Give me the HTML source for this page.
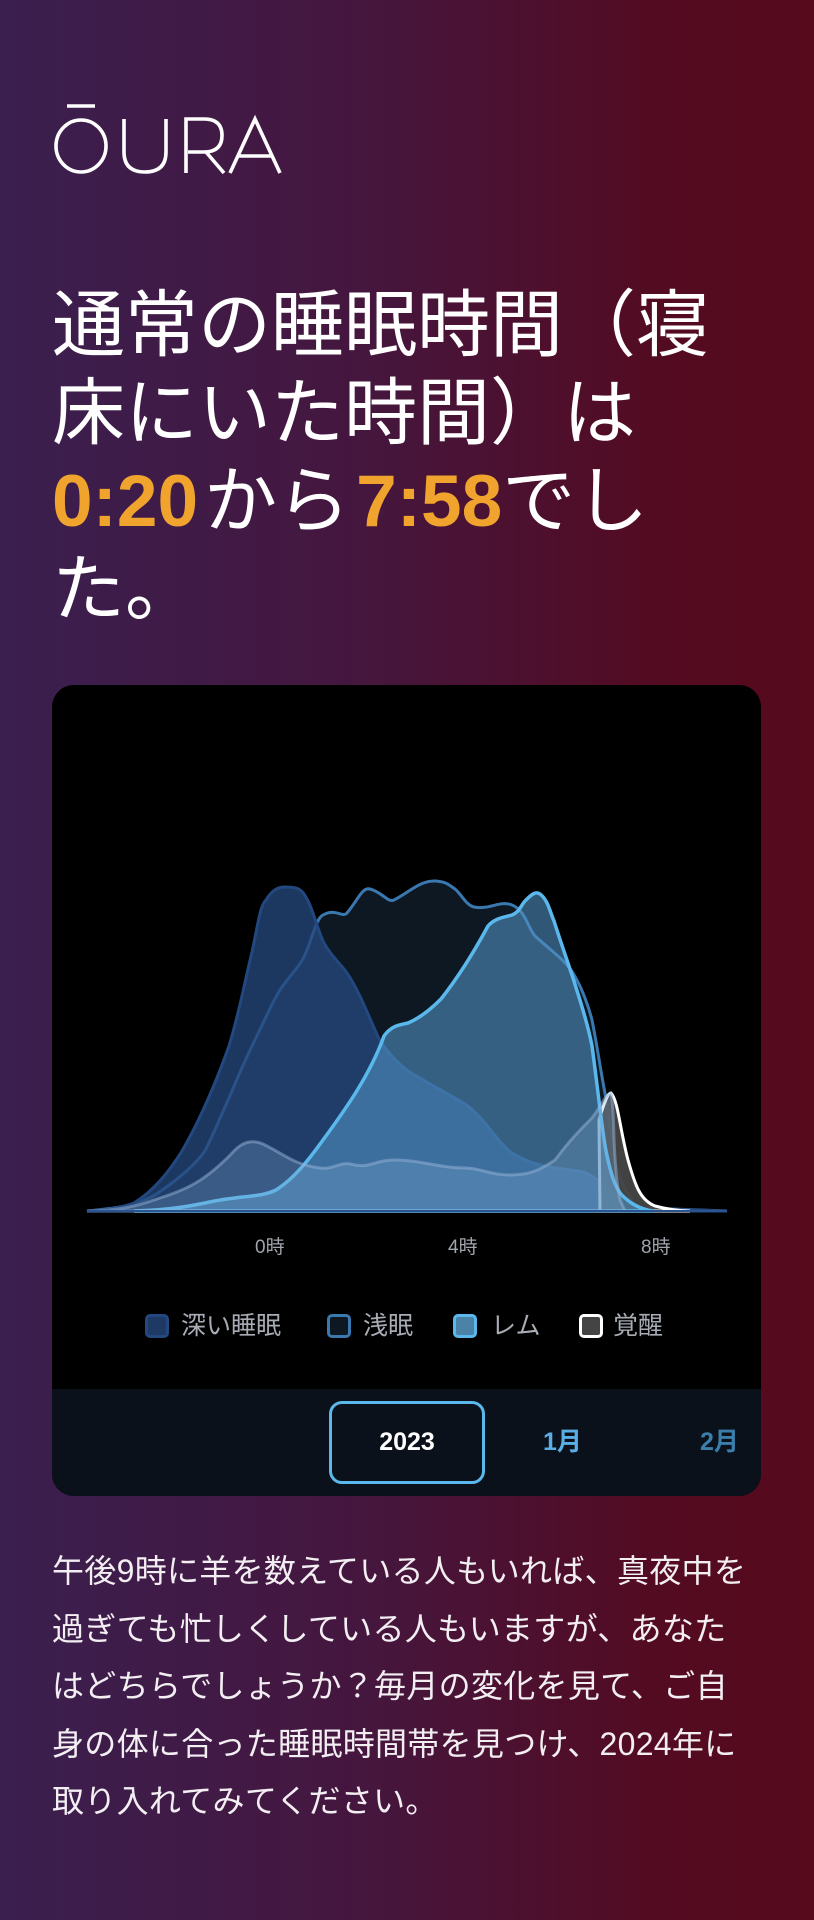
<!DOCTYPE html>
<html><head><meta charset="utf-8"><style>
*{margin:0;padding:0;box-sizing:border-box}
body{width:814px;height:1920px;overflow:hidden;position:relative;background:linear-gradient(90deg,#3b1f4f 0%,#45163e 45%,#530b22 80%,#560a1c 100%);font-family:"Liberation Sans","Noto Sans CJK JP",sans-serif;color:#fff}
.h{position:absolute;left:52px;top:282px;font-size:73px;line-height:88px;white-space:nowrap;font-weight:400}
.o{color:#f0a42e;font-weight:700}
.card{position:absolute;left:52px;top:685px;width:709px;height:811px;background:#000;border-radius:22px;overflow:hidden}
.bar{position:absolute;left:0;top:704px;width:709px;height:107px;background:#0b111a}
.btn{position:absolute;left:277px;top:716px;width:156px;height:83px;border:3px solid #5ab8ec;border-radius:13px;font-size:25px;font-weight:700;text-align:center;line-height:77px;color:#fff}
.m{position:absolute;top:716px;line-height:83px;font-size:25px;font-weight:700}
.lg{position:absolute;top:1311px;font-size:25px;color:#a8acb4;line-height:30px}
.sq{position:absolute;top:1314px;width:24px;height:24px;border-radius:5px;border:3px solid}
.ax{position:absolute;top:1232px;font-size:19px;color:#a0a4ac}
.p{position:absolute;left:52px;top:1543px;font-size:32px;line-height:57.5px;white-space:nowrap;color:#f2eef2;letter-spacing:0.3px}
</style></head><body>
<svg style="position:absolute;left:52px;top:104px" width="230" height="72" viewBox="0 0 230 72">
<g fill="none" stroke="#fff" stroke-width="3.6">
<line x1="15" y1="2" x2="43" y2="2"/>
<ellipse cx="29" cy="42" rx="25" ry="26"/>
<path d="M72 15 V48 Q72 68 93 68 Q114 68 114 48 V15"/>
<path d="M134 69 V15 H152 Q170 15 170 31.5 Q170 48 152 48 H136 M154 48 L172 69"/>
<path d="M178 69 L203 15 L228 69 M187 52 H220"/>
</g></svg>
<div class="h">通常の睡眠時間（寝<br>床にいた時間）は<br><span class="o" style="margin-right:6px">0:20</span>から<span class="o" style="margin-left:6px">7:58</span>でし<br>た。</div>
<div class="card">
<div class="bar"></div>
<div class="btn">2023</div>
<div class="m" style="left:491px;color:#5aaee6">1月</div>
<div class="m" style="left:648px;color:#3c7eab">2月</div>
</div>
<svg style="position:absolute;left:0;top:0" width="814" height="1920">
<path d="M87 1211 C120 1208 140 1205 158 1193 C180 1178 195 1165 205 1151 C225 1110 240 1070 252 1046 C265 1020 275 995 285 983 C295 970 300 965 304 957 C312 940 316 918 323 915 C335 908 343 918 347 913 C358 900 362 887 370 889 C382 892 388 903 394 900 C410 892 420 880 436 881 C448 882 450 886 455 889 C462 895 466 905 474 907 C490 910 500 900 512 905 C525 910 528 928 535 936 C550 950 563 958 573 973 C582 988 588 1005 592 1020 C598 1050 602 1080 606 1098 C612 1140 615 1165 620 1177 C628 1198 635 1206 644 1208 L727 1211 Z" fill="#0e1822" stroke="#3a78b0" stroke-width="3"/>
<path d="M87 1211 C110 1210 120 1208 134 1203 C155 1190 170 1170 182 1151 C200 1120 215 1085 229 1046 C240 1010 245 980 252 952 C258 925 260 905 266 900 C272 890 278 887 285 887 C295 887 300 888 304 894 C312 905 316 925 323 941 C330 955 340 963 347 973 C360 992 370 1020 380 1041 C395 1062 405 1070 418 1077 C435 1087 450 1095 465 1104 C485 1118 495 1140 512 1153 C535 1168 560 1168 583 1172 C600 1178 606 1190 616 1198 C630 1206 640 1209 653 1209 L727 1211 Z" fill="rgba(36,72,124,0.78)" stroke="#23477f" stroke-width="3"/>
<path d="M599 1120 C605 1100 608 1093 611 1093 C618 1100 620 1130 628 1160 C635 1185 640 1200 655 1206 C670 1210 680 1211 690 1211 L600 1211 Z" fill="rgba(70,70,70,0.95)" stroke="#fff" stroke-width="3"/>
<path d="M134 1211 C170 1210 190 1206 205 1203 C240 1195 260 1198 276 1190 C295 1178 310 1158 323 1140 C345 1110 370 1075 384 1036 C392 1025 400 1025 408 1023 C420 1018 430 1010 441 999 C460 975 475 950 488 926 C495 918 505 917 512 915 C520 912 522 903 526 900 C532 894 536 891 540 894 C548 900 550 912 554 921 C560 940 567 960 573 978 C580 1000 588 1025 592 1046 C598 1090 602 1130 606 1151 C612 1180 617 1192 625 1198 C635 1207 645 1210 653 1211 Z" fill="rgba(80,145,195,0.6)" stroke="#5ab8ec" stroke-width="3.5"/>
<path d="M87 1211 C130 1210 145 1203 160 1198 C185 1190 205 1182 235 1150 C245 1140 255 1140 265 1145 C285 1155 295 1165 320 1168 C335 1170 340 1160 355 1165 C370 1168 375 1160 395 1160 C420 1160 440 1168 465 1168 C480 1168 490 1175 510 1175 C530 1175 540 1170 555 1160 C570 1140 580 1130 590 1120 C600 1110 604 1095 611 1093 C615 1110 612 1160 620 1200 L625 1211 Z" fill="rgba(130,170,210,0.28)" stroke="rgba(150,180,215,0.5)" stroke-width="3"/>
<line x1="87" y1="1211" x2="727" y2="1211" stroke="#2a5590" stroke-width="2"/>
</svg>
<div class="ax" style="left:255px">0時</div>
<div class="ax" style="left:448px">4時</div>
<div class="ax" style="left:641px">8時</div>
<div class="sq" style="left:145px;background:#1e3a64;border-color:#23477f"></div><div class="lg" style="left:181px">深い睡眠</div>
<div class="sq" style="left:327px;background:#0e1822;border-color:#3a78b0"></div><div class="lg" style="left:363px">浅眠</div>
<div class="sq" style="left:453px;background:#4a82a8;border-color:#5ab8ec"></div><div class="lg" style="left:491px">レム</div>
<div class="sq" style="left:579px;background:#444;border-color:#fff"></div><div class="lg" style="left:613px">覚醒</div>
<div class="p">午後9時に羊を数えている人もいれば、真夜中を<br>過ぎても忙しくしている人もいますが、あなた<br>はどちらでしょうか？毎月の変化を見て、ご自<br>身の体に合った睡眠時間帯を見つけ、2024年に<br>取り入れてみてください。</div>
</body></html>
